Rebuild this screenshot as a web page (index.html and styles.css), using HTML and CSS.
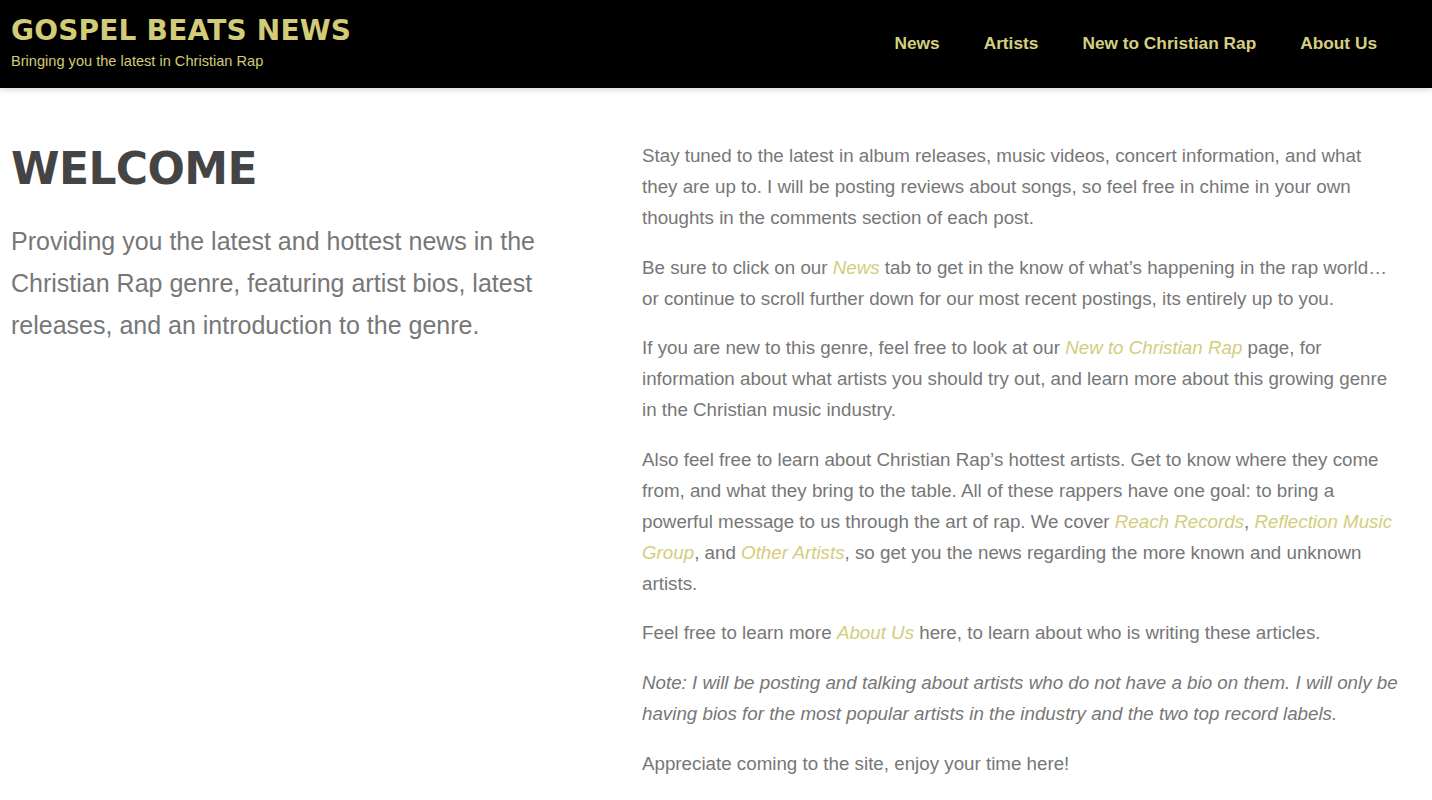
FILE: index.html
```html
<!DOCTYPE html>
<html>
<head>
<meta charset="utf-8">
<link rel="stylesheet" href="styles.css">
</head>
<body>
<header class="site-header">
  <div class="brand">
    <div class="brand-title">GOSPEL BEATS NEWS</div>
    <div class="brand-tagline">Bringing you the latest in Christian Rap</div>
  </div>
  <nav class="main-nav">
    <a href="#">News</a>
    <a href="#">Artists</a>
    <a href="#">New to Christian Rap</a>
    <a href="#">About Us</a>
  </nav>
</header>
<main class="content">
  <section class="intro">
    <h1 class="welcome">WELCOME</h1>
    <p class="lead">Providing you the latest and hottest news in the Christian Rap genre, featuring artist bios, latest releases, and an introduction to the genre.</p>
  </section>
  <section class="body-text">
    <p>Stay tuned to the latest in album releases, music videos, concert information, and what they are up to. I will be posting reviews about songs, so feel free in chime in your own thoughts in the comments section of each post.</p>
    <p>Be sure to click on our <a href="#">News</a> tab to get in the know of what’s happening in the rap world… or continue to scroll further down for our most recent postings, its entirely up to you.</p>
    <p>If you are new to this genre, feel free to look at our <a href="#">New to Christian Rap</a> page, for information about what artists you should try out, and learn more about this growing genre in the Christian music industry.</p>
    <p>Also feel free to learn about Christian Rap’s hottest artists. Get to know where they come from, and what they bring to the table. All of these rappers have one goal: to bring a powerful message to us through the art of rap. We cover <a href="#">Reach Records</a>, <a href="#">Reflection Music Group</a>, and <a href="#">Other Artists</a>, so get you the news regarding the more known and unknown artists.</p>
    <p>Feel free to learn more <a href="#">About Us</a> here, to learn about who is writing these articles.</p>
    <p class="note">Note: I will be posting and talking about artists who do not have a bio on them. I will only be having bios for the most popular artists in the industry and the two top record labels.</p>
    <p>Appreciate coming to the site, enjoy your time here!</p>
  </section>
</main>
</body>
</html>
```

FILE: styles.css
```css
html, body {
  margin: 0;
  padding: 0;
  background: #fff;
}
body {
  font-family: "Liberation Sans", Arial, sans-serif;
  color: #777;
}
.site-header {
  background: #000;
  height: 88px;
  display: flex;
  align-items: center;
  justify-content: space-between;
  padding: 0 55px 0 11px;
  box-sizing: border-box;
  box-shadow: 0 2px 6px rgba(0,0,0,0.15);
}
.brand {
  display: flex;
  flex-direction: column;
  margin-top: -6px;
}
.brand-title {
  font-family: "DejaVu Sans", sans-serif;
  font-weight: bold;
  font-size: 28px;
  line-height: 36px;
  letter-spacing: 0.2px;
  color: #d2cb78;
}
.brand-tagline {
  font-size: 14.6px;
  line-height: 18px;
  color: #d2cb78;
  margin-top: 3px;
}
.main-nav {
  display: flex;
  gap: 44px;
  margin-top: -2px;
}
.main-nav a {
  color: #d6cf80;
  font-weight: bold;
  font-size: 17.3px;
  text-decoration: none;
}
.content {
  display: grid;
  grid-template-columns: 560px 757px;
  column-gap: 71px;
  padding: 0 0 0 11px;
}
.welcome {
  font-family: "DejaVu Sans", sans-serif;
  font-weight: bold;
  font-size: 44px;
  line-height: 56px;
  letter-spacing: -0.6px;
  color: #444;
  margin: 53px 0 0;
}
.lead {
  font-size: 25px;
  line-height: 42px;
  color: #777;
  margin: 23px 0 0;
}
.body-text {
  padding-top: 52px;
}
.body-text p {
  font-size: 18.75px;
  line-height: 31px;
  margin: 0 0 18.6px;
}
.body-text a {
  color: #d4cd7c;
  font-style: italic;
  text-decoration: none;
}
.body-text .note {
  font-style: italic;
}
```
